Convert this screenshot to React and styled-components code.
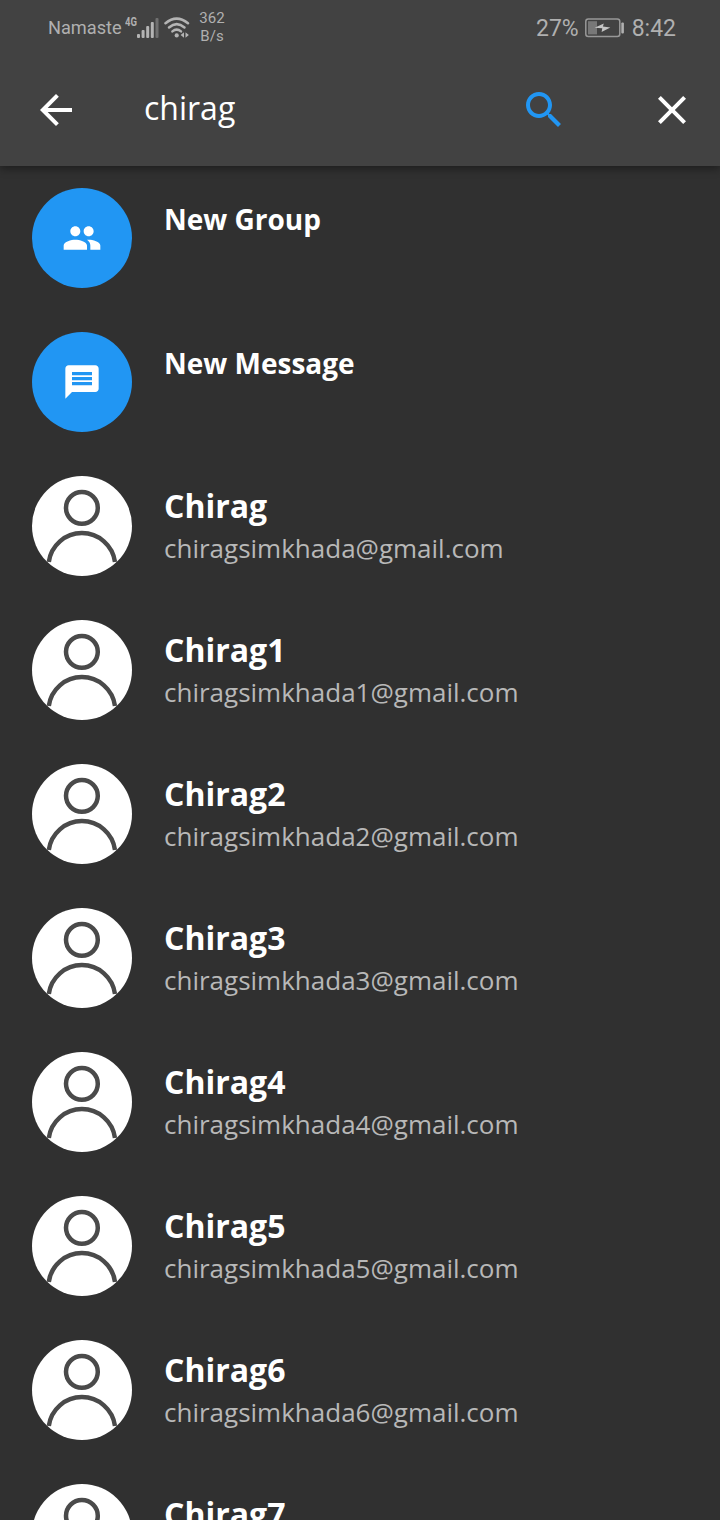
import React from "react";
import styled, { createGlobalStyle } from "styled-components";

const GlobalStyle = createGlobalStyle`
  * { box-sizing: border-box; }
  html, body { margin: 0; background: #303030; }
  body { height: 1520px; overflow: hidden; font-family: "Open Sans", sans-serif; }
  svg { display: block; flex: none; }
`;

const Screen = styled.main`
  display: flex;
  flex-direction: column;
  width: 720px;
  height: 1520px;
  overflow: hidden;
  background: #303030;
`;

const Header = styled.header`
  flex: none;
  height: 166px;
  background: #424242;
  box-shadow: 0 3px 8px rgba(0, 0, 0, 0.38);
  z-index: 1;
`;

const StatusBar = styled.div`
  display: flex;
  justify-content: space-between;
  height: 56px;
  padding: 0 44px 0 48px;
  font-family: Roboto, sans-serif;
  color: #b0b0b0;
`;

const StatusGroup = styled.div`
  display: flex;
  align-items: center;
`;

const Carrier = styled.span`
  width: 77px;
  font-size: 18.2px;
  line-height: 24px;
  white-space: nowrap;
`;

const NetworkType = styled.span`
  align-self: flex-start;
  width: 12px;
  margin-top: 15px;
  font-size: 12.5px;
  font-weight: 700;
  line-height: 14px;
  transform: scaleX(0.76);
  transform-origin: left;
`;

const WifiWrap = styled.div`
  margin-left: 5px;
`;

const Speed = styled.div`
  width: 26px;
  margin-left: 9px;
  padding-bottom: 2px;
  font-size: 15px;
  line-height: 18px;
  text-align: center;
  white-space: nowrap;
`;

const StatusText = styled.span`
  width: ${({ $width }) => $width}px;
  padding-top: 2px;
  font-size: 23px;
  line-height: 28px;
  text-align: ${({ $align }) => $align || "left"};
  white-space: nowrap;
`;

const AppBar = styled.div`
  display: flex;
  align-items: center;
  height: 110px;
  padding: 0 24px 2px 32px;
`;

const IconButton = styled.button`
  padding: 0;
  border: 0;
  background: none;
  color: ${({ $color }) => $color || "#fff"};
`;

const Query = styled.div`
  flex: 1;
  padding: 0 0 4px 64px;
  font-size: 32px;
  line-height: 46px;
  color: #fff;
`;

const Actions = styled.div`
  display: flex;
  gap: 80px;
`;

const List = styled.ul`
  margin: 0;
  padding: 0;
  list-style: none;
`;

const Row = styled.li`
  display: flex;
  gap: 32px;
  height: 144px;
  padding: 22px 32px;
`;

const Avatar = styled.div`
  display: flex;
  flex: none;
  align-items: center;
  justify-content: center;
  width: 100px;
  height: 100px;
  border-radius: 50%;
  overflow: hidden;
  background: ${({ $action }) => ($action ? "#2196f3" : "#fff")};
  color: #fff;
`;

const ActionLabel = styled.div`
  padding-top: 12px;
  font-size: 28px;
  font-weight: 700;
  line-height: 38px;
  color: #fff;
`;

const Details = styled.div`
  padding-top: 8px;
`;

const Name = styled.div`
  font-size: 32px;
  font-weight: 700;
  line-height: 44px;
  color: #fff;
`;

const Email = styled.div`
  margin-top: 2px;
  font-size: 26px;
  line-height: 36px;
  color: #b8b8b8;
`;

const paths = {
  back: "M20 11H7.83l5.59-5.59L12 4l-8 8 8 8 1.41-1.41L7.83 13H20v-2z",
  search:
    "M15.5 14h-.79l-.28-.27C15.41 12.59 16 11.11 16 9.5 16 5.91 13.09 3 9.5 3S3 5.91 3 9.5 5.91 16 9.5 16c1.61 0 3.09-.59 4.23-1.57l.27.28v.79l5 4.99L20.49 19l-4.99-5zm-6 0C7.01 14 5 11.99 5 9.5S7.01 5 9.5 5 14 7.01 14 9.5 11.99 14 9.5 14z",
  close:
    "M19 6.41L17.59 5 12 10.59 6.41 5 5 6.41 10.59 12 5 17.59 6.41 19 12 13.41 17.59 19 19 17.59 13.41 12z",
  people:
    "M16 11c1.66 0 2.99-1.34 2.99-3S17.66 5 16 5c-1.66 0-3 1.34-3 3s1.34 3 3 3zm-8 0c1.66 0 2.99-1.34 2.99-3S9.66 5 8 5C6.34 5 5 6.34 5 8s1.34 3 3 3zm0 2c-2.33 0-7 1.17-7 3.5V19h14v-2.5c0-2.33-4.67-3.5-7-3.5zm8 0c-.29 0-.62.02-.97.05 1.16.84 1.97 1.97 1.97 3.45V19h6v-2.5c0-2.33-4.67-3.5-7-3.5z",
  message:
    "M20 2H4c-1.1 0-1.99.9-1.99 2L2 22l4-4h14c1.1 0 2-.9 2-2V4c0-1.1-.9-2-2-2zm-2 12H6v-2h12v2zm0-3H6V9h12v2zm0-3H6V6h12v2z",
};

const Icon = ({ name, size = 48 }) => (
  <svg width={size} height={size} viewBox="0 0 24 24" fill="currentColor">
    <path d={paths[name]} />
  </svg>
);

const SignalIcon = () => (
  <svg width="22" height="22" viewBox="0 0 22 22" fill="#b4b4b4">
    <rect x="0" y="17" width="3" height="4" rx="1" />
    <rect x="4.6" y="13" width="3" height="8" rx="1" />
    <rect x="9.2" y="9" width="3" height="12" rx="1" />
    <rect x="13.8" y="5" width="3" height="16" rx="1" />
    <rect x="18.5" y="1" width="3" height="20" rx="1" fill="#707070" />
  </svg>
);

const WifiIcon = () => (
  <svg width="26" height="22" viewBox="0 0 26 22">
    <g fill="none" stroke="#b4b4b4" strokeWidth="2.5" strokeLinecap="round">
      <path d="M1.5 6.3Q12.5-3 24 6.3" />
      <path d="M5 10.5Q12.7 3.8 20.5 10.5" />
      <path d="M8.4 14.4Q12.7 10.8 17 14.4" />
    </g>
    <circle cx="12.7" cy="18.4" r="2.1" fill="#b4b4b4" />
    <path d="M20 15.3v5.4L16.6 18zM21.5 15.3v5.4L24.9 18z" fill="#b4b4b4" />
  </svg>
);

const BatteryIcon = () => (
  <svg width="40" height="20" viewBox="0 0 40 20">
    <rect x="0.8" y="1" width="34" height="17.6" rx="2.5" fill="none" stroke="#989898" strokeWidth="1.5" />
    <rect x="3" y="3.2" width="9" height="13.2" fill="#787878" />
    <path d="M9.6 9.8l9.2-4.4-.9 3.2 7.4.8-8.7 4.5.7-3.6z" fill="#c4c4c4" />
    <rect x="36.3" y="4.4" width="2.6" height="11" rx="1" fill="#b0b0b0" />
  </svg>
);

const PersonIcon = () => (
  <svg width="100" height="100" viewBox="0 0 100 100" fill="none" stroke="#4a4a4a" strokeWidth="4.5">
    <circle cx="49.9" cy="31.8" r="15.9" />
    <path d="M16.8 86A33.4 33.4 0 0 1 83 86" />
  </svg>
);

const actions = [
  { label: "New Group", icon: "people" },
  { label: "New Message", icon: "message" },
];

const contacts = ["", "1", "2", "3", "4", "5", "6", "7"].map((n) => ({
  name: `Chirag${n}`,
  email: `chiragsimkhada${n}@gmail.com`,
}));

export default function App() {
  return (
    <>
      <GlobalStyle />
      <Screen>
        <Header>
          <StatusBar>
            <StatusGroup>
              <Carrier>Namaste</Carrier>
              <NetworkType>4G</NetworkType>
              <SignalIcon />
              <WifiWrap>
                <WifiIcon />
              </WifiWrap>
              <Speed>
                362
                <br />
                B/s
              </Speed>
            </StatusGroup>
            <StatusGroup>
              <StatusText $width={49}>27%</StatusText>
              <BatteryIcon />
              <StatusText $width={51} $align="right">
                8:42
              </StatusText>
            </StatusGroup>
          </StatusBar>
          <AppBar>
            <IconButton aria-label="Back">
              <Icon name="back" />
            </IconButton>
            <Query>chirag</Query>
            <Actions>
              <IconButton aria-label="Search" $color="#2196f3">
                <Icon name="search" />
              </IconButton>
              <IconButton aria-label="Clear">
                <Icon name="close" />
              </IconButton>
            </Actions>
          </AppBar>
        </Header>
        <List>
          {actions.map((a) => (
            <Row key={a.label}>
              <Avatar $action>
                <Icon name={a.icon} size={40} />
              </Avatar>
              <ActionLabel>{a.label}</ActionLabel>
            </Row>
          ))}
          {contacts.map((c) => (
            <Row key={c.name}>
              <Avatar>
                <PersonIcon />
              </Avatar>
              <Details>
                <Name>{c.name}</Name>
                <Email>{c.email}</Email>
              </Details>
            </Row>
          ))}
        </List>
      </Screen>
    </>
  );
}
